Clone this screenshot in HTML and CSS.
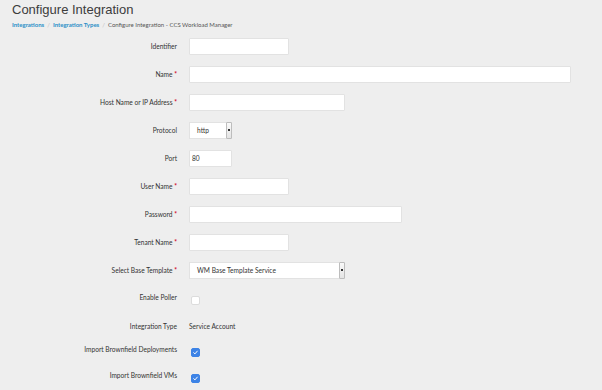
FILE: index.html
```html
<!DOCTYPE html>
<html>
<head>
<meta charset="utf-8">
<link rel="stylesheet" href="styles.css">
</head>
<body>
<div class="page">
  <h1 class="title">Configure Integration</h1>
  <nav class="crumbs">
    <a class="crumb-link">Integrations</a><span class="sep">/</span><a class="crumb-link">Integration Types</a><span class="sep">/</span><span class="crumb-current">Configure Integration - CCS Workload Manager</span>
  </nav>
  <form class="form">
    <div class="row"><label class="lbl">Identifier</label><div class="field"><div class="input w100"></div></div></div>
    <div class="row"><label class="lbl">Name <span class="req">*</span></label><div class="field"><div class="input w382"></div></div></div>
    <div class="row"><label class="lbl">Host Name or IP Address <span class="req">*</span></label><div class="field"><div class="input w156"></div></div></div>
    <div class="row"><label class="lbl">Protocol</label><div class="field"><div class="select w43"><span class="sel-text">http</span><span class="sel-btn"><i></i></span></div></div></div>
    <div class="row"><label class="lbl">Port</label><div class="field"><div class="input w43">80</div></div></div>
    <div class="row"><label class="lbl">User Name <span class="req">*</span></label><div class="field"><div class="input w100"></div></div></div>
    <div class="row"><label class="lbl">Password <span class="req">*</span></label><div class="field"><div class="input w213"></div></div></div>
    <div class="row"><label class="lbl">Tenant Name <span class="req">*</span></label><div class="field"><div class="input w100"></div></div></div>
    <div class="row"><label class="lbl">Select Base Template <span class="req">*</span></label><div class="field"><div class="select w156"><span class="sel-text">WM Base Template Service</span><span class="sel-btn"><i></i></span></div></div></div>
    <div class="row short first-short"><label class="lbl up">Enable Poller</label><div class="field"><span class="check"></span></div></div>
    <div class="row short"><label class="lbl">Integration Type</label><div class="field"><span class="static">Service Account</span></div></div>
    <div class="row short"><label class="lbl up">Import Brownfield Deployments</label><div class="field"><span class="check on"><svg viewBox="0 0 10 10" width="9" height="9"><path d="M2.4 5.2 L4.2 7 L7.6 3" fill="none" stroke="#fff" stroke-width="1.4" stroke-linecap="round" stroke-linejoin="round"/></svg></span></div></div>
    <div class="row short"><label class="lbl up">Import Brownfield VMs</label><div class="field"><span class="check on"><svg viewBox="0 0 10 10" width="9" height="9"><path d="M2.4 5.2 L4.2 7 L7.6 3" fill="none" stroke="#fff" stroke-width="1.4" stroke-linecap="round" stroke-linejoin="round"/></svg></span></div></div>
  </form>
</div>
</body>
</html>
```
FILE: styles.css
```css
* { box-sizing: border-box; }
html, body { margin: 0; padding: 0; background: #eeeeee; }
body { font-family: Lato, "Open Sans", "Liberation Sans", sans-serif; color: #333; }
.page { width: 602px; height: 390px; overflow: hidden; padding: 1px 0 0 12px; }
.title {
  margin: 0;
  font-family: "Liberation Sans", Arial, sans-serif;
  font-weight: normal;
  font-size: 13px;
  line-height: 18px;
  color: #3c3c3c;
}
.crumbs { margin-top: 1px; font-size: 6px; line-height: 10px; height: 12px; }
.crumb-link { color: #2a8fc7; font-weight: bold; }
.crumb-current { color: #555; }
.sep { color: #bbb; margin: 0 3px; }
.form { margin-left: -12px; }
.row { display: flex; align-items: center; height: 28px; }
.row.short { height: 26px; }
.row.first-short { margin-top: 3px; }
.lbl {
  width: 177px;
  text-align: right;
  font-size: 6.6px;
  color: #333;
  white-space: nowrap;
}
.lbl.up { position: relative; top: -3px; }
.req { color: #d0021b; font-weight: bold; }
.field { margin-left: 12px; display: flex; align-items: center; }
.input {
  height: 17px;
  background: #fff;
  border: 1px solid #e2e2e2;
  border-radius: 1px;
  font-size: 6.6px;
  line-height: 15px;
  padding-left: 2px;
  color: #333;
}
.w100 { width: 100px; }
.w382 { width: 382px; }
.w156 { width: 156px; }
.w43 { width: 43px; }
.w213 { width: 213px; }
.select {
  height: 17px;
  background: #fff;
  border: 1px solid #e2e2e2;
  display: flex;
  align-items: center;
  font-size: 6.6px;
}
.sel-text { flex: 1; padding-left: 7px; color: #333; }
.sel-btn {
  width: 6px;
  height: 17px;
  margin-right: -1px;
  background: linear-gradient(#fafafa, #e4e4e4);
  border: 1px solid #bdbdbd;
  border-radius: 1px;
  display: flex;
  align-items: center;
  justify-content: center;
}
.sel-btn i { display: block; width: 2px; height: 2px; background: #333; }
.check {
  display: inline-flex;
  align-items: center;
  justify-content: center;
  width: 9px;
  height: 9px;
  margin-left: 2px;
  border: 1px solid #dcdcdc;
  border-radius: 2px;
  background: #fff;
}
.check.on { background: #3d83e6; border-color: #3d83e6; }
.check svg { display: block; }
.static { font-size: 6.6px; color: #333; }
```
